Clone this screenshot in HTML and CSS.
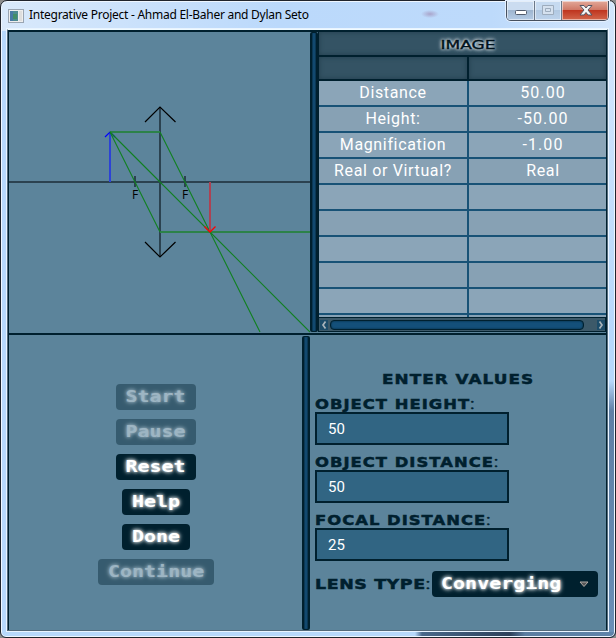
FILE: index.html
```html
<!DOCTYPE html>
<html lang="en">
<head>
<meta charset="utf-8">
<title>Integrative Project</title>
<link rel="stylesheet" href="styles.css">
</head>
<body>
<div class="window">
  <header class="titlebar">
    <svg class="app-icon" width="16" height="14" viewBox="0 0 16 14"><rect x=".5" y=".5" width="15" height="13" fill="#eee" stroke="#9aa5b2"/><rect x="2" y="2" width="8" height="10" fill="#4d8b91"/><rect x="2" y="2" width="3" height="10" fill="#4879a5"/><rect x="5" y="5" width="4" height="5" fill="#438d68"/><path d="M11 2h3v10h-3z" fill="#dedede"/></svg>
    <span class="title">Integrative Project - Ahmad El-Baher and Dylan Seto</span>
    <div class="controls">
      <span class="ctl min"><svg width="28" height="19"><rect x="8.5" y="9.5" width="11" height="4" rx="1" fill="#fff" stroke="#515b6c"/></svg></span>
      <span class="ctl max"><svg width="27" height="19"><path d="M7.500 4.500h11v9h-11zM10.500 7.500h5v3h-5z" fill="#d5e1ef" stroke="#9dacbd"/></svg></span>
      <span class="ctl close"><svg width="46" height="19"><path d="M18 4.500h4l2 2.500 2-2.500h4l-4 4.500 4 5h-4l-2-2.500-2 2.500h-4l4-5z" fill="#f5f5f5" stroke="#555563"/></svg></span>
    </div>
  </header>
  <main class="client">
    <section class="top">
      <svg class="diagram" width="301" height="301" viewBox="9 32 301 301">
        <g fill="none">
          <path d="M9 182H310M160 107V257" class="axis"/>
          <path d="M135 176v11M185 176v11" class="axis"/>
          <path d="M145 122l15-15 15.500 15M145 242l15 15 15.500-15" class="lens"/>
          <path d="M110 132V182" class="object"/>
          <path d="M105 137l5-5 5 5" class="object-head"/>
          <path d="M110 132H160M160 232H310" class="ray-flat"/>
          <path d="M160 132L260 332M110 132L160 232" class="ray"/>
          <path d="M110 132L310 332" class="ray-main"/>
          <path d="M210 182v50" class="image"/>
          <path d="M204.500 226.500l5.500 5.500 5.500-5.500" class="image-head"/>
        </g>
        <text x="132" y="199" class="focus">F</text><text x="182" y="199" class="focus">F</text>
      </svg>
      <div class="splitter"></div>
      <div class="results">
        <div class="head"><span class="glow">IMAGE</span></div>
        <div class="subhead"><i></i><i></i></div>
        <div class="rows">
          <div class="row"><span><b>Distance</b></span><span><b class="num">50.00</b></span></div>
          <div class="row"><span><b>Height:</b></span><span><b class="num">-50.00</b></span></div>
          <div class="row"><span><b>Magnification</b></span><span><b class="num">-1.00</b></span></div>
          <div class="row"><span><b>Real or Virtual?</b></span><span><b>Real</b></span></div>
          <div class="row"><span></span><span></span></div>
          <div class="row"><span></span><span></span></div>
          <div class="row"><span></span><span></span></div>
          <div class="row"><span></span><span></span></div>
          <div class="row"><span></span><span></span></div>
          <div class="row last"><span></span><span></span></div>
        </div>
        <div class="scrollbar">
          <svg width="8" height="10"><path d="M5.500 1.500L3 5l2.500 3.500" class="chev"/></svg>
          <div class="thumb"></div>
          <svg width="8" height="10"><path d="M2.500 1.500L5 5 2.500 8.500" class="chev"/></svg>
        </div>
      </div>
    </section>
    <section class="bottom">
      <div class="buttons">
        <div class="btn w80 off"><span>Start</span></div>
        <div class="btn w80 off"><span>Pause</span></div>
        <div class="btn w80"><span>Reset</span></div>
        <div class="btn w68"><span>Help</span></div>
        <div class="btn w68"><span>Done</span></div>
        <div class="btn w116 off"><span>Continue</span></div>
      </div>
      <div class="splitter lower"></div>
      <div class="form">
        <div class="label heading">ENTER VALUES</div>
        <div class="label">OBJECT HEIGHT<em>:</em></div>
        <div class="field">50</div>
        <div class="label">OBJECT DISTANCE<em>:</em></div>
        <div class="field">50</div>
        <div class="label">FOCAL DISTANCE<em>:</em></div>
        <div class="field">25</div>
        <div class="lens-row">
          <div class="label">LENS TYPE<em>:</em></div>
          <div class="btn select"><span>Converging</span><svg width="10" height="7"><path d="M1 1h8L5 5.500z" fill="#555" stroke="#b0aaa5"/></svg></div>
        </div>
      </div>
    </section>
  </main>
</div>
</body>
</html>
```

FILE: styles.css
```css
* { box-sizing: border-box; }
body { margin: 0; background: #8c8c8c; overflow: hidden; }
.window {
  width: 616px; height: 638px; padding: 0 7px 6px 6px;
  border: 1px solid #20242c; border-radius: 7px 7px 6px 6px;
  background:
    radial-gradient(ellipse 9px 4px at 119px 13px, #a9a5cb, transparent) 310px 0 / 306px 30px no-repeat,
    linear-gradient(90deg, transparent 0 105px, #49688a 112px, #2d415b 200px, #5b7da1 215px, #6084aa) 309px 631px / 307px 7px no-repeat,
    linear-gradient(#d3e6fc 0, #b7d8fb 300px, #b7d8fb 350px, #5e7fa5 380px, #6a8fb7 100%) 608px 30px / 8px 608px no-repeat,
    linear-gradient(90deg, #d9e9fb, #bbd9fb 45%, #bddafb 80%, #d3e6fc) 0 0 / 100% 30px no-repeat,
    #b7d8fb;
  box-shadow: inset 0 0 0 1px #eef6ff;
}
.titlebar { height: 28px; display: flex; align-items: flex-start; }
.app-icon { margin: 8px 0 0 1px; }
.title { margin: 5px 0 0 5px; font: 12px/17px "Noto Sans", sans-serif; letter-spacing: -0.26px; color: #000; white-space: nowrap; }
.controls { display: flex; margin: 0 -1px 0 auto; height: 20px; border: 1px solid #46505f; border-top: 0; border-radius: 0 0 5px 5px; overflow: hidden; box-shadow: 0 0 0 1px #e4f0ff; }
.ctl { display: block; height: 19px; border-right: 1px solid #6b7889; box-shadow: inset 0 0 0 1px #ffffff80; }
.ctl svg { display: block; }
.min { width: 28px; background: linear-gradient(#cbdcf0 45%, #9fb6d0 50%, #b5cce6); }
.max { width: 27px; background: linear-gradient(#c6daf0 45%, #b2c9e2 50%, #bdd3ec); }
.close { width: 46px; border: 0; background: linear-gradient(#e2a899, #d07a68 45%, #bf3620 50%, #d2664b); }
.client { height: 602px; border: 1px solid #536a7b; border-top-color: #effaff; background: #5c849b; box-shadow: 0 0 0 1px #e9f4ff; }
.top { height: 305px; display: flex; border: 1px solid #00202e; border-width: 2px 1px; }
.diagram { display: block; flex: none; }
.axis { stroke: #2b4250; stroke-width: 2; }
.lens { stroke: #000; stroke-width: 1.2; }
.object { stroke: #2c42d6; stroke-width: 2; }
.object-head { stroke: #00f; stroke-width: 1.2; }
.ray, .ray-main { stroke: #108020; stroke-width: 1.1; }
.ray-flat { stroke: #2c8249; stroke-width: 2; }
.image { stroke: #ac4253; stroke-width: 2; }
.image-head { stroke: #f00; stroke-width: 1.3; }
.focus { font: 12px "Open Sans", sans-serif; fill: #000; }
.splitter { width: 8px; height: 300px; flex: none; border: solid #00202e; border-width: 1px 2px; background: linear-gradient(90deg, #0b344f, #14507a 50%, #0b344f); border-radius: 2px; box-shadow: inset 0 0 1px #00202e; }
.results { width: 288px; height: 300px; display: flex; flex-direction: column; border-left: 1px solid #00202e; font-family: Roboto, sans-serif; }
.head, .subhead i { background: #345364; box-shadow: inset 0 0 5px #223e4d; }
.head { height: 23px; text-align: center; }
.glow { display: inline-block; margin-left: 11px; font: 13px/25px "DejaVu Sans", sans-serif; color: #00121c; -webkit-text-stroke: .4px #00121c; text-shadow: 0 0 3px #fff, 0 0 3px #dfeaf2, 0 0 5px #b9ccd6; transform: scaleX(1.31); }
.subhead { height: 26px; padding: 2px 0; background: #00202e; display: grid; grid-template-columns: 148px 137px; gap: 2px; }
.rows { height: 236px; overflow: hidden; }
.row { height: 26px; display: grid; grid-template-columns: 148px 148px; gap: 2px; padding-bottom: 2px; background: #185276; }
.rows, .scrollbar { width: 287px; }
.row.last { height: 2px; padding: 0; }
.row span { background: #8ba5b8; text-align: center; color: #fff; line-height: 24px; overflow: hidden; }
.row:nth-child(even) span { background: #87a1b4; }
.row b { font-weight: 400; font-size: 16px; letter-spacing: .65px; }
.row .num { letter-spacing: 1.1px; }
.scrollbar { height: 15px; display: flex; align-items: center; padding: 0 1px; background: #3c5969; border: 1px solid #00202e; border-left: 0; }
.scrollbar svg { background: #1c4c69; flex: none; }
.chev { fill: none; stroke: #a9b4bb; stroke-width: 1.7; }
.thumb { width: 254px; height: 10px; margin: 0 13px 0 2px; border: 1px solid #00202e; border-radius: 4px; background: #14507a; box-shadow: inset 0 0 2px #00202e; flex: none; }
.bottom { height: 295px; display: flex; border: solid #00202e; border-width: 0 1px; }
.buttons { width: 293px; padding: 49px 0 0 1px; display: flex; flex-direction: column; align-items: center; gap: 9px; }
.btn { height: 26px; border-radius: 4px; background: #00202e; display: flex; align-items: center; justify-content: center; font: bold 15px/24px "DejaVu Sans Mono", monospace; color: #fff; text-shadow: 0 0 3px #fff, 0 0 5px #d9e3e8; }
.btn span { transform: scaleX(1.33); }
.off { opacity: .4; }
.w80 { width: 80px; } .w68 { width: 68px; } .w116 { width: 116px; }
.lower { height: 294px; margin-top: 1px; }
.form { width: 296px; padding: 35px 0 0 5px; }
.label { width: max-content; height: 17px; font: bold 14.500px/18px "DejaVu Sans", sans-serif; color: #00202e; -webkit-text-stroke: .5px #00202e; white-space: nowrap; letter-spacing: .9px; transform: scaleX(1.13); transform-origin: 0 0; }
.label em { font: 15px Roboto, sans-serif; }
.heading { margin-left: 67px; height: 25px; line-height: 19px; transform: scaleX(1.16); }
.field { width: 194px; height: 33px; margin-bottom: 8px; border: 2px solid #00202e; background: #316583; color: #fff; font: 15px/30px Roboto, sans-serif; padding-left: 11px; }
.lens-row { display: flex; margin-top: 10px; height: 26px; }
.lens-row .label { width: 117px; line-height: 26px; letter-spacing: .5px; transform: scaleX(1.2); }
.select { width: 166px; justify-content: space-between; padding: 0 9px 0 24px; }
```
